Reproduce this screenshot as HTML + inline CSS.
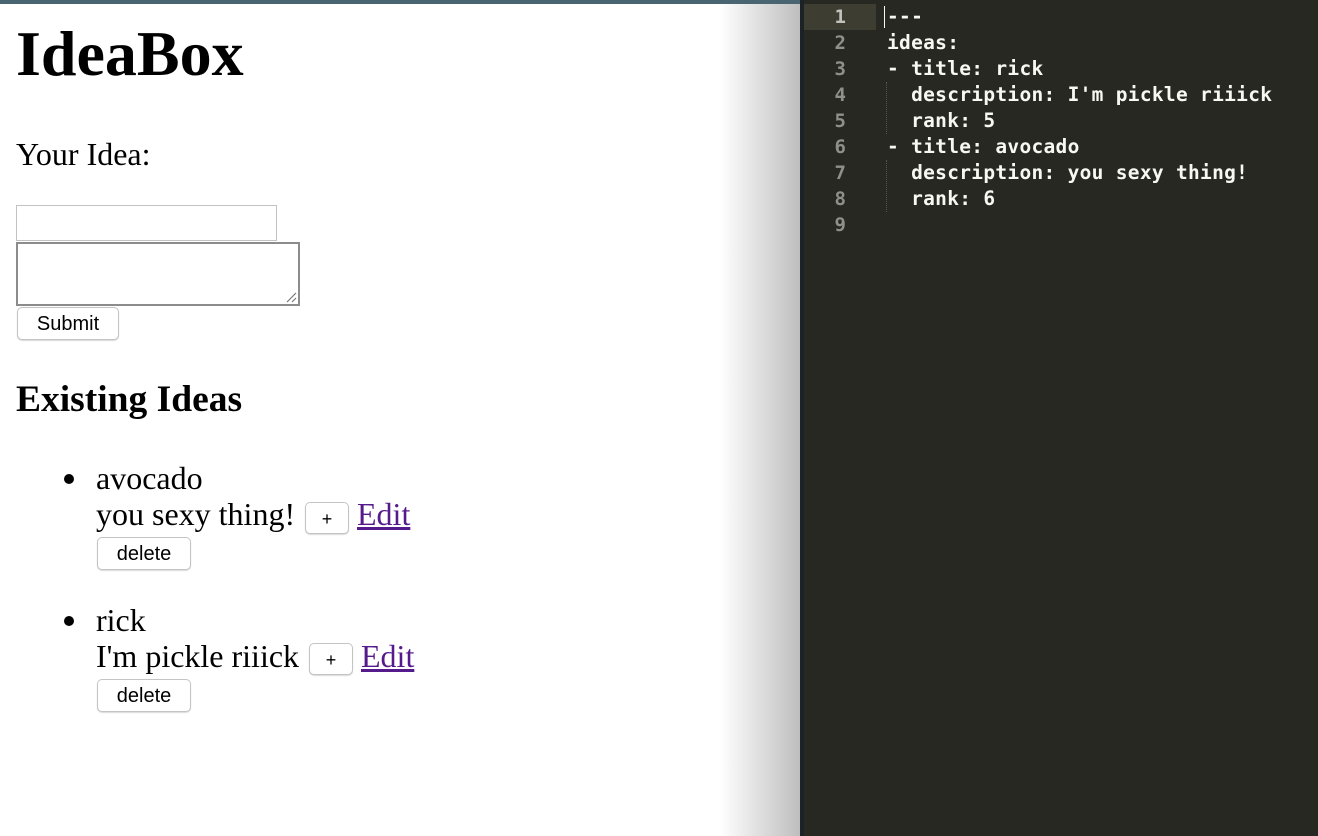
<!DOCTYPE html>
<html><head><meta charset="utf-8"><style>
html,body{margin:0;padding:0;width:1318px;height:836px;overflow:hidden;background:#fff;position:relative;font-family:"Liberation Serif",serif;color:#000}
.a{position:absolute;white-space:nowrap}
.topbar{position:absolute;left:0;top:0;width:800px;height:4px;background:#4a6572}
.shade{position:absolute;left:720px;top:4px;width:80px;height:832px;background:linear-gradient(to right,rgba(200,200,200,0),rgba(190,190,190,1))}
.btn{position:absolute;box-sizing:border-box;border:1px solid #c4c4c4;border-radius:5px;background:#fff;box-shadow:0 1px 1px rgba(0,0,0,.15);font-family:"Liberation Sans",sans-serif;font-size:20px;text-align:center;color:#000}
.ed{position:absolute;left:800px;top:0;width:518px;height:836px;background:#282823;border-left:4px solid #1b2327;box-sizing:border-box}
.ln{position:absolute;left:804px;width:42px;text-align:right;font-family:"DejaVu Sans Mono","Liberation Mono",monospace;font-size:19px;font-weight:bold;color:#8f908a;line-height:26px}
.cd{position:absolute;left:887px;font-family:"DejaVu Sans Mono","Liberation Mono",monospace;font-size:19.5px;font-weight:bold;color:#f8f8f2;line-height:26px;white-space:pre;letter-spacing:0.3px}
.guide{position:absolute;left:886px;width:0;border-left:1px dotted #555}
a{color:#551a8b;text-decoration:underline}
.t{font-size:32px;line-height:32px}
</style></head><body>
<div class="topbar"></div>
<div class="shade"></div>
<div class="a" style="left:16px;top:22px;font-size:64px;font-weight:bold;line-height:64px">IdeaBox</div>
<div class="a t" style="left:16px;top:138px">Your Idea:</div>
<div class="a" style="left:16px;top:205px;width:261px;height:36px;box-sizing:border-box;border:1px solid #c2c2c2"></div>
<div class="a" style="left:16px;top:242px;width:284px;height:64px;box-sizing:border-box;border:2px solid #8c8c8c">
<svg style="position:absolute;right:1px;bottom:1px" width="12" height="12"><path d="M2 11L11 2M7 11L11 7" stroke="#777" stroke-width="1.2"/></svg></div>
<div class="btn" style="left:17px;top:307px;width:102px;height:33px;line-height:33px">Submit</div>
<div class="a" style="left:16px;top:381px;font-size:37.5px;font-weight:bold;line-height:37.5px">Existing Ideas</div>

<div class="a" style="left:64px;top:474px;width:10px;height:10px;border-radius:50%;background:#000"></div>
<div class="a t" style="left:96px;top:462px">avocado</div>
<div class="a t" style="left:96px;top:498px">you sexy thing!</div>
<div class="btn" style="left:305px;top:502px;width:44px;height:32px;line-height:32px;font-size:18px">+</div>
<div class="a t" style="left:357px;top:498px"><a>Edit</a></div>
<div class="btn" style="left:97px;top:537px;width:94px;height:33px;line-height:33px">delete</div>

<div class="a" style="left:64px;top:616px;width:10px;height:10px;border-radius:50%;background:#000"></div>
<div class="a t" style="left:96px;top:604px">rick</div>
<div class="a t" style="left:96px;top:640px">I'm pickle riiick</div>
<div class="btn" style="left:309px;top:643px;width:44px;height:32px;line-height:32px;font-size:18px">+</div>
<div class="a t" style="left:361px;top:640px"><a>Edit</a></div>
<div class="btn" style="left:97px;top:679px;width:94px;height:33px;line-height:33px">delete</div>

<div class="ed"></div>
<div class="a" style="left:804px;top:4px;width:72px;height:26px;background:#3e3d32"></div>
<div class="ln" style="top:4px;color:#c2c2bc">1</div>
<div class="ln" style="top:30px">2</div>
<div class="ln" style="top:56px">3</div>
<div class="ln" style="top:82px">4</div>
<div class="ln" style="top:108px">5</div>
<div class="ln" style="top:134px">6</div>
<div class="ln" style="top:160px">7</div>
<div class="ln" style="top:186px">8</div>
<div class="ln" style="top:212px">9</div>
<div class="a" style="left:884px;top:6px;width:1px;height:22px;background:#f8f8f0"></div>
<div class="guide" style="top:82px;height:52px"></div>
<div class="guide" style="top:160px;height:52px"></div>
<div class="cd" style="top:4px">---</div>
<div class="cd" style="top:30px">ideas:</div>
<div class="cd" style="top:56px">- title: rick</div>
<div class="cd" style="top:82px">  description: I'm pickle riiick</div>
<div class="cd" style="top:108px">  rank: 5</div>
<div class="cd" style="top:134px">- title: avocado</div>
<div class="cd" style="top:160px">  description: you sexy thing!</div>
<div class="cd" style="top:186px">  rank: 6</div>
</body></html>
